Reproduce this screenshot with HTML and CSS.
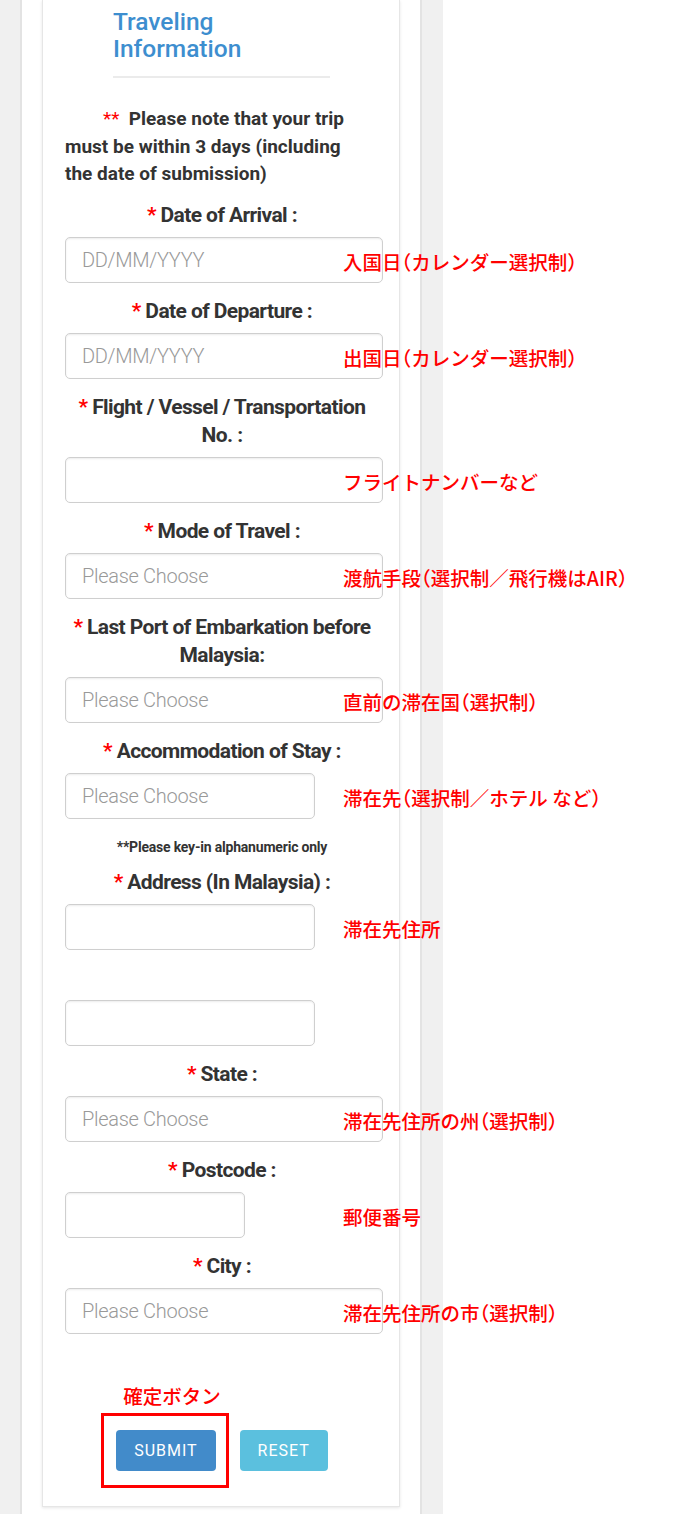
FILE: index.html
```html
<!DOCTYPE html>
<html lang="en">
<head>
<meta charset="utf-8">
<title>Traveling Information</title>
<link rel="stylesheet" href="styles.css">
</head>
<body>
<div class="page">
  <div class="panel">
    <form class="card">
      <div class="heading">
        <h2 class="title">Traveling Information</h2>
        <hr class="divider">
      </div>
      <p class="notice"><span class="req-note">**</span>&nbsp; Please note that your trip must be within 3 days (including the date of submission)</p>

      <div class="field">
        <label class="label"><span class="req">*</span> Date of Arrival :</label>
        <div class="control">
          <input class="input" type="text" placeholder="DD/MM/YYYY">
          <span class="memo">入国日<span class="paren">（</span>カレンダー選択制<span class="paren">）</span></span>
        </div>
      </div>

      <div class="field">
        <label class="label"><span class="req">*</span> Date of Departure :</label>
        <div class="control">
          <input class="input" type="text" placeholder="DD/MM/YYYY">
          <span class="memo">出国日<span class="paren">（</span>カレンダー選択制<span class="paren">）</span></span>
        </div>
      </div>

      <div class="field">
        <label class="label"><span class="req">*</span> Flight / Vessel / Transportation No. :</label>
        <div class="control">
          <input class="input" type="text">
          <span class="memo">フライトナンバーなど</span>
        </div>
      </div>

      <div class="field">
        <label class="label"><span class="req">*</span> Mode of Travel :</label>
        <div class="control">
          <select class="input select"><option>Please Choose</option></select>
          <span class="memo">渡航手段<span class="paren">（</span>選択制／飛行機はAIR<span class="paren">）</span></span>
        </div>
      </div>

      <div class="field">
        <label class="label"><span class="req">*</span> Last Port of Embarkation before Malaysia:</label>
        <div class="control">
          <select class="input select"><option>Please Choose</option></select>
          <span class="memo">直前の滞在国<span class="paren">（</span>選択制<span class="paren">）</span></span>
        </div>
      </div>

      <div class="field">
        <label class="label"><span class="req">*</span> Accommodation of Stay :</label>
        <div class="control">
          <select class="input select input-md"><option>Please Choose</option></select>
          <span class="memo">滞在先<span class="paren">（</span>選択制／ホテル など<span class="paren">）</span></span>
        </div>
      </div>

      <p class="hint">**Please key-in alphanumeric only</p>

      <div class="field">
        <label class="label"><span class="req">*</span> Address (In Malaysia) :</label>
        <div class="control">
          <input class="input input-md" type="text">
          <span class="memo">滞在先住所</span>
        </div>
        <div class="control">
          <input class="input input-md" type="text">
        </div>
      </div>

      <div class="field">
        <label class="label"><span class="req">*</span> State :</label>
        <div class="control">
          <select class="input select"><option>Please Choose</option></select>
          <span class="memo">滞在先住所の州<span class="paren">（</span>選択制<span class="paren">）</span></span>
        </div>
      </div>

      <div class="field">
        <label class="label"><span class="req">*</span> Postcode :</label>
        <div class="control">
          <input class="input input-sm" type="text">
          <span class="memo">郵便番号</span>
        </div>
      </div>

      <div class="field">
        <label class="label"><span class="req">*</span> City :</label>
        <div class="control">
          <select class="input select"><option>Please Choose</option></select>
          <span class="memo">滞在先住所の市<span class="paren">（</span>選択制<span class="paren">）</span></span>
        </div>
      </div>

      <div class="actions">
        <div class="submit-wrap">
          <span class="memo memo-top">確定ボタン</span>
          <span class="focus-box"></span>
          <button class="btn btn-primary" type="button">Submit</button>
        </div>
        <button class="btn btn-info" type="button">Reset</button>
      </div>
    </form>
  </div>
  <div class="gutter"></div>
  <div class="aside"></div>
</div>
</body>
</html>
```

FILE: styles.css
```css
* {
  box-sizing: border-box;
}

html,
body {
  margin: 0;
  padding: 0;
}

body {
  background: #f0f0f0;
  font-family: Roboto, "Liberation Sans", Arial, sans-serif;
  color: #333;
}

.page {
  display: flex;
  min-height: 1514px;
  padding-left: 20px;
}

.panel {
  width: 402px;
  flex: none;
  background: #fff;
  border-left: 2px solid #e3e3e3;
  border-right: 2px solid #e3e3e3;
  padding: 0 20px 8px;
}

.gutter {
  width: 21px;
  flex: none;
}

.aside {
  flex: 1;
  background: #fff;
}

.card {
  background: #fff;
  border: 1px solid #e6e6e6;
  border-top: 0;
  box-shadow: 0 1px 3px rgba(0, 0, 0, 0.1);
  padding: 8px 16px 35px 22px;
}

.heading {
  width: 217px;
  margin-left: 48px;
}

.title {
  margin: 0;
  font-size: 24.5px;
  font-weight: 500;
  line-height: 27px;
  color: #3d8ecf;
}

.divider {
  margin: 14px 0 0;
  border: 0;
  border-top: 2px solid #ebebeb;
}

.notice {
  margin: 27px 0 13px;
  max-width: 300px;
  font-size: 19px;
  font-weight: 700;
  line-height: 27.5px;
  text-indent: 38px;
}

.req-note {
  color: #f00;
  font-weight: 400;
}

.field {
  margin-bottom: 14px;
}

.label {
  display: block;
  text-align: center;
  font-size: 21px;
  font-weight: 700;
  letter-spacing: -0.6px;
  line-height: 28px;
  margin-bottom: 8px;
  padding-right: 4px;
}

.req {
  color: #f00;
}

.control {
  position: relative;
}

.control + .control {
  margin-top: 50px;
}

.input {
  display: block;
  width: 100%;
  height: 46px;
  margin: 0;
  padding: 0 16px;
  background: #fff;
  border: 1px solid #cfcfcf;
  border-radius: 5px;
  box-shadow: inset 0 1px 2px rgba(0, 0, 0, 0.08);
  font-family: Roboto, "Liberation Sans", Arial, sans-serif;
  font-size: 20px;
  font-weight: 300;
  letter-spacing: -0.3px;
  color: #555;
  outline: none;
}

.input::placeholder {
  color: #999;
}

.select {
  appearance: none;
  -webkit-appearance: none;
  color: #999;
}

.input-md {
  width: 250px;
}

.input-sm {
  width: 180px;
}

.memo {
  position: absolute;
  left: 278px;
  top: 50%;
  transform: translateY(-50%);
  margin-top: 2px;
  z-index: 2;
  font-family: "Noto Sans CJK JP", sans-serif;
  font-size: 19.5px;
  font-weight: 500;
  line-height: 24px;
  color: #f00;
  white-space: nowrap;
}

.paren {
  font-feature-settings: "halt";
}

.hint {
  margin: 19px 0 12px;
  padding-right: 4px;
  text-align: center;
  font-size: 14px;
  font-weight: 700;
  line-height: 18px;
  letter-spacing: -0.2px;
}

.actions {
  display: flex;
  justify-content: center;
  gap: 24px;
  margin-top: 96px;
  padding-right: 4px;
}

.submit-wrap {
  position: relative;
}

.memo-top {
  left: 7px;
  top: -46px;
  transform: none;
  margin-top: 0;
}

.focus-box {
  position: absolute;
  left: -15px;
  top: -17px;
  right: -13px;
  bottom: -17px;
  border: 3px solid #f00;
}

.btn {
  display: block;
  height: 41px;
  padding: 0 18px;
  border: 0;
  border-radius: 4px;
  color: #fff;
  font-family: Roboto, "Liberation Sans", Arial, sans-serif;
  font-size: 16px;
  font-weight: 400;
  letter-spacing: 1px;
  text-transform: uppercase;
}

.btn-primary {
  background: #428bca;
}

.btn-info {
  background: #5bc0de;
}
```
